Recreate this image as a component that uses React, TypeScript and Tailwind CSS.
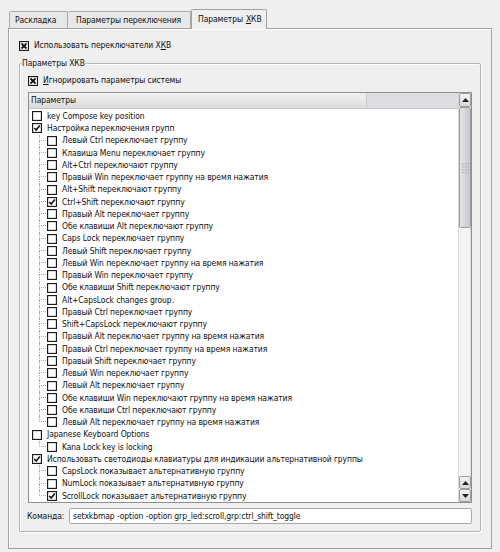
import React from "react";

type Mark = "none" | "x" | "check";

const rows: [number, string, Mark][] = [
  [1, "key Compose key position", "none"],
  [1, "Настройка переключения групп", "check"],
  [2, "Левый Ctrl переключает группу", "none"],
  [2, "Клавиша Menu переключает группу", "none"],
  [2, "Alt+Ctrl переключают группу", "none"],
  [2, "Правый Win переключает группу на время нажатия", "none"],
  [2, "Alt+Shift переключают группу", "none"],
  [2, "Ctrl+Shift переключают группу", "check"],
  [2, "Правый Alt переключает группу", "none"],
  [2, "Обе клавиши Alt переключают группу", "none"],
  [2, "Caps Lock переключает группу", "none"],
  [2, "Левый Shift переключает группу", "none"],
  [2, "Левый Win переключает группу на время нажатия", "none"],
  [2, "Правый Win переключает группу", "none"],
  [2, "Обе клавиши Shift переключают группу", "none"],
  [2, "Alt+CapsLock changes group.", "none"],
  [2, "Правый Ctrl переключает группу", "none"],
  [2, "Shift+CapsLock переключают группу", "none"],
  [2, "Правый Alt переключает группу на время нажатия", "none"],
  [2, "Правый Ctrl переключает группу на время нажатия", "none"],
  [2, "Правый Shift переключает группу", "none"],
  [2, "Левый Win переключает группу", "none"],
  [2, "Левый Alt переключает группу", "none"],
  [2, "Обе клавиши Win переключают группу на время нажатия", "none"],
  [2, "Обе клавиши Ctrl переключают группу", "none"],
  [2, "Левый Alt переключает группу на время нажатия", "none"],
  [1, "Japanese Keyboard Options", "none"],
  [2, "Kana Lock key is locking", "none"],
  [1, "Использовать светодиоды клавиатуры для индикации альтернативной группы", "check"],
  [2, "CapsLock показывает альтернативную группу", "none"],
  [2, "NumLock показывает альтернативную группу", "none"],
  [2, "ScrollLock показывает альтернативную группу", "check"],
];

const Box = ({ mark }: { mark: Mark }) => (
  <svg width="10" height="10" viewBox="0 0 10 10" className="shrink-0">
    <rect x="0.5" y="0.5" width="9" height="9" fill="#fff" stroke="#1c1c1c" strokeWidth="1.3" />
    {mark === "x" && (
      <path d="M2.5 2.5 L7.5 7.5 M7.5 2.5 L2.5 7.5" stroke="#111" strokeWidth="1.8" />
    )}
    {mark === "check" && (
      <path d="M2.3 5 L4.2 7 L7.8 2.6" fill="none" stroke="#111" strokeWidth="1.6" />
    )}
  </svg>
);

const Tree = ({ last }: { last: boolean }) => (
  <span className="flex h-full w-[7px] flex-col shrink-0">
    <span className="h-1/2 border-l border-b border-dotted border-[#a8a8a8]" />
    <span className={last ? "h-1/2" : "h-1/2 border-l border-dotted border-[#a8a8a8]"} />
  </span>
);

export default function App() {
  return (
    <div
      className="w-[500px] h-[552px] bg-[#efefef] text-[8.5px] tracking-[-0.1px] text-[#111] overflow-hidden"
      style={{ fontFamily: '"DejaVu Sans Condensed", "Liberation Sans", sans-serif' }}
    >
      {/* tabs */}
      <div className="flex items-end pl-[9px] pt-[8px] h-[28px]">
        <div className="h-[17px] w-[59px] flex items-center pl-[5px] border border-b-0 border-[#a9a9a9] rounded-t-[2px] bg-[#e8e8e8]">
          Раскладка
        </div>
        <div className="h-[17px] w-[123px] flex items-center pl-[8px] border border-l-0 border-b-0 border-[#a9a9a9] rounded-t-[2px] bg-[#e8e8e8]">
          Параметры переключения
        </div>
        <div className="h-[20px] w-[76px] flex items-center pl-[6px] pb-[1px] border border-b-0 border-[#a0a0a0] rounded-t-[2px] bg-[#efefef] relative z-10 -mb-px">
          Параметры <span className="underline ml-[3px]">Х</span>КВ
        </div>
      </div>

      {/* panel */}
      <div className="ml-[8px] w-[484px] h-[521px] border border-[#a0a0a0] shadow-[inset_1px_1px_0_#fff] pt-[10px] pl-[10px]">
        <div className="flex items-center gap-[5px] h-[13px]">
          <Box mark="x" />
          <span>
            Использовать переключатели Х<span className="underline">К</span>В
          </span>
        </div>

        {/* group box */}
        <div className="relative mt-[11px] w-[462px] h-[469px] border border-[#b4b4b4] shadow-[inset_1px_1px_0_#fff,1px_1px_0_#fff] rounded-[2px] pt-[10px] pl-[8px]">
          <span className="absolute -top-[7px] left-[1px] px-[1px] bg-[#efefef]">Параметры ХКВ</span>

          <div className="flex items-center gap-[5px] h-[13px]">
            <Box mark="x" />
            <span>
              <span className="underline">И</span>гнорировать параметры системы
            </span>
          </div>

          {/* list */}
          <div className="mt-[5px] w-[444px] h-[411px] border border-[#8f8f8f] flex bg-white">
            <div className="flex-1 flex flex-col overflow-hidden">
              <div className="h-[16px] flex shrink-0 border-b border-[#c6c6c6]">
                <div className="w-[338px] flex items-center pl-[2px] bg-gradient-to-b from-[#f2f2f2] to-[#dcdcdc] border-r border-[#c8c8c8]">
                  Параметры
                </div>
                <div className="flex-1 bg-[#dedee2]" />
              </div>
              <div className="pt-[1px]">
                {rows.map(([level, label, mark], i) => {
                  const next = rows[i + 1];
                  const last = !next || next[0] === 1;
                  return (
                    <div key={i} className="flex items-center h-[12.25px] whitespace-nowrap">
                      {level === 1 ? (
                        <span className="pl-[3px] flex items-center gap-[5px]">
                          <Box mark={mark} />
                          <span>{label}</span>
                        </span>
                      ) : (
                        <span className="pl-[10px] flex items-center h-full">
                          <Tree last={last} />
                          <span className="flex items-center gap-[5px] ml-[1px]">
                            <Box mark={mark} />
                            <span>{label}</span>
                          </span>
                        </span>
                      )}
                    </div>
                  );
                })}
              </div>
            </div>

            {/* scrollbar */}
            <div className="w-[13px] flex flex-col bg-[#f4f4f4] border-l border-[#d6d6d6]">
              <div className="h-[14px] flex items-center justify-center border border-[#9c9c9c] rounded-[2px] bg-gradient-to-b from-[#f4f4f4] to-[#d8d8dc]">
                <svg width="7" height="4" viewBox="0 0 7 4"><path d="M3.5 0 L7 4 L0 4 Z" fill="#222" /></svg>
              </div>
              <div className="h-[121px] flex items-center justify-center border border-[#9c9c9c] rounded-[2px] bg-gradient-to-r from-[#e4e4e8] via-[#d6d6dc] to-[#c8c8ce]">
                <svg width="8" height="12" viewBox="0 0 8 12">
                  {[0, 3, 6, 9].map((y) =>
                    [0, 3, 6].map((x) => <rect key={`${x}-${y}`} x={x + 1} y={y + 1} width="1.5" height="1.5" fill="#b0b0b4" />)
                  )}
                </svg>
              </div>
              <div className="flex-1 border-r border-dotted border-[#c8c8c8]" />
              <div className="h-[13px] flex items-center justify-center border border-[#9c9c9c] rounded-[2px] bg-gradient-to-b from-[#f4f4f4] to-[#d8d8dc]">
                <svg width="7" height="4" viewBox="0 0 7 4"><path d="M3.5 0 L7 4 L0 4 Z" fill="#222" /></svg>
              </div>
              <div className="h-[13px] flex items-center justify-center border border-[#9c9c9c] rounded-[2px] bg-gradient-to-b from-[#f4f4f4] to-[#d8d8dc]">
                <svg width="7" height="4" viewBox="0 0 7 4"><path d="M0 0 L7 0 L3.5 4 Z" fill="#222" /></svg>
              </div>
            </div>
          </div>

          {/* command */}
          <div className="mt-[5px] flex items-center h-[16px]">
            <span className="w-[42px] -ml-[1px]">Команда:</span>
            <div className="w-[403px] h-[16px] border border-[#a8a8a8] rounded-[2px] bg-white flex items-center pl-[3px]">
              setxkbmap -option -option grp_led:scroll,grp:ctrl_shift_toggle
            </div>
          </div>
        </div>
      </div>
    </div>
  );
}
